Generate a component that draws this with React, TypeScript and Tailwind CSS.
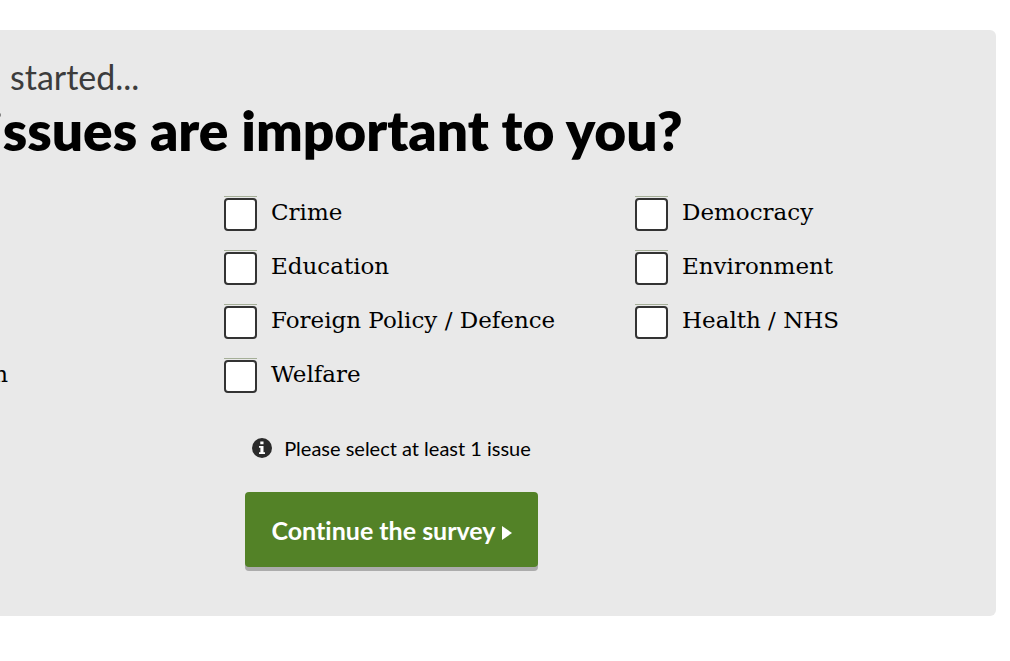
const columns = [
  ['Crime', 'Education', 'Foreign Policy / Defence', 'Welfare'],
  ['Democracy', 'Environment', 'Health / NHS'],
];

function IssueOption({ label }: { label: string }) {
  return (
    <label className="flex h-[54px] cursor-pointer items-start gap-3.5">
      <span className="border-t border-[#a5af98] pt-px">
        <input
          type="checkbox"
          name="issues"
          value={label}
          className="block h-[33px] w-[33px] appearance-none rounded-[4px] border-2 border-[#333333] bg-white checked:bg-[#538227]"
        />
      </span>
      <span className="font-['DejaVu_Serif',serif] text-[23px] leading-8 whitespace-nowrap">
        {label}
      </span>
    </label>
  );
}

function InfoIcon() {
  return (
    <svg viewBox="0 0 20 20" className="h-5 w-5" aria-hidden="true">
      <circle cx="10" cy="10" r="10" fill="#2b2b2b" />
      <path d="M8.3 3.5h3.2v2.7H8.3zM7 8h4.5v6.2H13V16H7v-1.8h1.4V9.8H7z" fill="#ffffff" />
    </svg>
  );
}

export default function App() {
  return (
    <main className="min-h-screen bg-white pt-[30px] pr-3.5 pb-[45px] font-['Lato',sans-serif] text-black [font-variant-ligatures:none]">
      <section className="overflow-hidden rounded-r-md bg-[#e9e9e9] pt-6 pb-[49px]">
        <p className="pl-2.5 text-[34px] leading-[46px] text-[#3c3c3c]">started...</p>
        <h1 className="-ml-3 text-[55px] leading-[60px] font-extrabold whitespace-nowrap">
          issues are important to you?
        </h1>

        <form onSubmit={(e) => e.preventDefault()}>
          <div className="grid grid-cols-[224px_411px_1fr] pt-9">
            <div className="flex w-2 items-end justify-end pb-[22px] font-['DejaVu_Serif',serif] text-[23px] leading-8">
              n
            </div>
            {columns.map((labels) => (
              <div key={labels[0]}>
                {labels.map((label) => (
                  <IssueOption key={label} label={label} />
                ))}
              </div>
            ))}
          </div>

          <div className="flex w-[783px] flex-col items-center pt-[22px]">
            <p className="flex items-center gap-3 text-[20px] leading-7">
              <InfoIcon />
              Please select at least 1 issue
            </p>
            <button
              type="submit"
              className="mt-[30px] flex h-[75px] items-center gap-1.5 rounded-[4px] bg-[#538227] px-[26px] pt-0.5 text-[25px] font-bold text-white shadow-[0_4px_0_#acacac]"
            >
              Continue the survey
              <svg viewBox="0 0 10 14" className="mt-1 h-3.5 w-2.5" aria-hidden="true">
                <path d="M0 0L10 7L0 14Z" fill="currentColor" />
              </svg>
            </button>
          </div>
        </form>
      </section>
    </main>
  );
}
